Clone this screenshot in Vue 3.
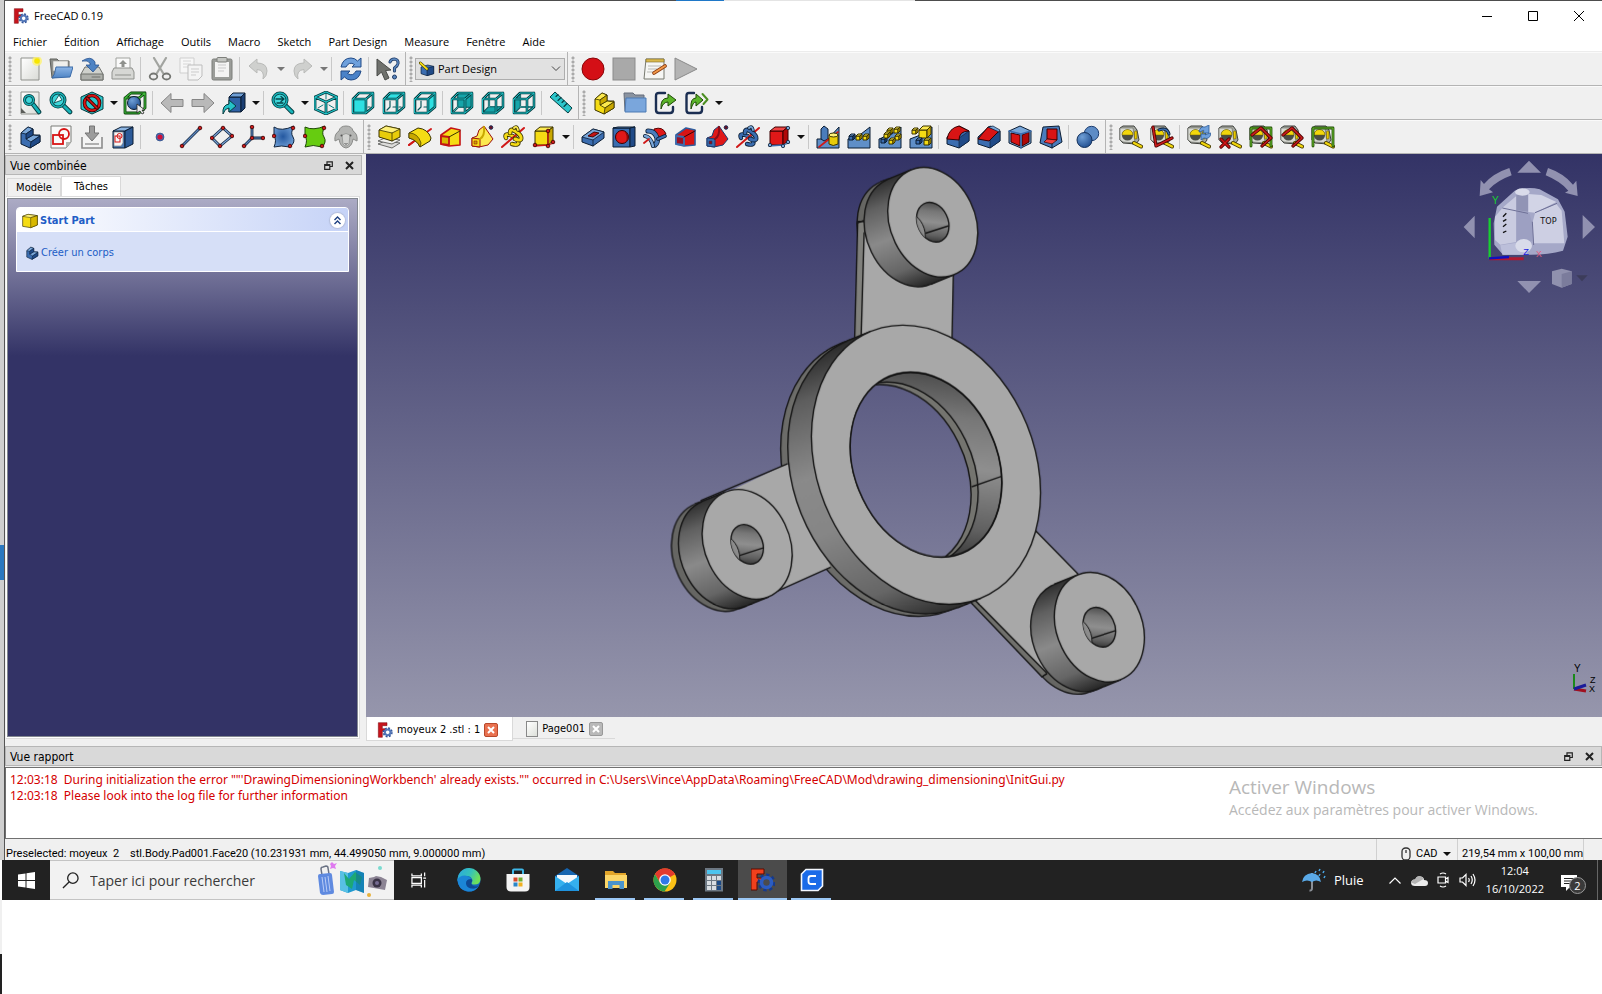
<script setup>
import { ref } from 'vue'

const menus = ['Fichier', 'Édition', 'Affichage', 'Outils', 'Macro', 'Sketch', 'Part Design', 'Measure', 'Fenêtre', 'Aide']
const workbench = ref('Part Design')
const search = ref('')

/* ---------- icon building blocks (24 x 24 canvas) ---------- */
const poly = (pts, fill, stroke = '#0b1521', w = 1) =>
  `<polygon points="${pts}" fill="${fill}" stroke="${stroke}" stroke-width="${w}" stroke-linejoin="round"/>`
const line = (d, stroke, w = 1.5) =>
  `<path d="${d}" fill="none" stroke="${stroke}" stroke-width="${w}" stroke-linecap="round" stroke-linejoin="round"/>`
const dot = (x, y, r = 1.8) => `<circle cx="${x}" cy="${y}" r="${r}" fill="#cc1a1a" stroke="#3a0000" stroke-width=".8"/>`
const tube = (d, inner, outer, w = 2) => line(d, outer, w + 1.6) + line(d, inner, w)
const box = (x, y, w, h, dx, dy, c, stroke) =>
  poly(`${x},${y} ${x + w},${y} ${x + w},${y + h} ${x},${y + h}`, c[0], stroke) +
  poly(`${x},${y} ${x + dx},${y - dy} ${x + w + dx},${y - dy} ${x + w},${y}`, c[1], stroke) +
  poly(`${x + w},${y} ${x + w + dx},${y - dy} ${x + w + dx},${y + h - dy} ${x + w},${y + h}`, c[2], stroke)

const Y = ['#f5dc14', '#fce94f', '#c9a800']
const B = ['#3b6db0', '#79a6d8', '#204a87']
const ys = '#3a3300'
const bs = '#0b1d33'

const cubeFaces = {
  front: '2,8 15,8 15,22 2,22', top: '2,8 8,2 22,2 15,8', right: '15,8 22,2 22,16 15,22',
  back: '8,2 22,2 22,16 8,16', bottom: '2,22 8,16 22,16 15,22', left: '2,8 8,2 8,16 2,22'
}
const view = (face) => {
  const solid = ['front', 'top', 'right'].includes(face)
  const hidden = solid
    ? line('M8 10V16L5 19M11 16H14M17 16H19', '#0d5a5e', 1.2)
    : tube('M8 2V16H22M8 16L2 22', '#7fe0e2', '#0d5a5e', 0.6)
  const frame = tube('M2 8H15V22H2ZM2 8L8 2H22V16L15 22M15 8L22 2', '#1fc6ca', '#063c40', 1)
  const fill = poly(cubeFaces[face], solid ? '#2ee0e2' : '#16a5aa', '#0d5a5e', 0.6)
  return hidden + fill + frame
}
const lens = (x, y, r, extra = '') =>
  line(`M${x + r * 0.7} ${y + r * 0.7}L21 21`, '#063c40', 4.6) + line(`M${x + r * 0.7} ${y + r * 0.7}L21 21`, '#17b3b8', 2.8) +
  `<circle cx="${x}" cy="${y}" r="${r}" fill="#3fd6da" stroke="#063c40" stroke-width="3"/><circle cx="${x}" cy="${y}" r="${r}" fill="none" stroke="#17b3b8" stroke-width="1.4"/>` + extra
const tape =
  poly('1,3 4,1 15,1 18,5 20,15 17,19 4,18 1,15', '#a6a9a2', '#3f413d') +
  poly('1,3 14,3 16,18 4,17 1,15', '#d7d9d3', '#5f615c', 0.6) +
  '<circle cx="8.500" cy="10" r="5.600" fill="#4a4c46"/><path d="M3 10A5.500 5.500 0 0 1 14 10Z" fill="#f2d60c" stroke="#6d5f00" stroke-width=".5"/>' +
  '<rect x="15.500" y="6" width="2.500" height="8" rx="1" fill="#e8c800" stroke="#6d5f00" stroke-width=".6"/>' +
  line('M15 18L22 21.500', '#4a3f00', 4) + line('M15 18L22 21.500', '#f2d60c', 2.2)
const arrowShape = 'M1 12L11 2.500V8.500H23V15.500H11V21.500Z'
const sheet = '<path d="M3 1H21V23H3Z" fill="url(#gPaper)" stroke="#8f918c"/>'
const ramp = poly('1,14 14,9 23,2 23,23 1,23', '#5f8fc8', bs)
const filletBody = poly('1,12 1,19 13,23 23,16 23,6 13,1', '#3b6db0', bs) + poly('13,13 23,6 23,16 13,23', '#204a87', bs, 0.6)
const L = (c, s) =>
  poly('3,8 10,2 15,4 15,10 22,10 22,17 12,23 3,19', c[0], s) + poly('3,8 10,2 15,4 8,9', c[1], s, 0.8) +
  poly('8,14 15,10 22,11 13,17', c[1], s, 0.8) + poly('8,9 15,4 15,10 8,14', c[2], s, 0.8) + poly('13,17 22,11 22,17 12,23', c[2], s, 0.8)
const pipe = (c, s) => poly('2,13 7,11 9,5 14,1 23,14 18,20 9,22 2,21', c[1], s) + poly('2,13 10,14 10,22 2,21', c[0], s) +
  line('M10 14Q15 11 14 2', c[2], 2) + poly('4,16 7,16 7,19 4,19', c[2], s, 0.6) + '<circle cx="21" cy="2.500" r="1.800" fill="#6b1020" stroke="#1f2a55"/>'
const helix = (c, s) => tube('M5 13Q3 8 9 10T17 16Q19 21 11 19', c[0], s, 2.8) + line('M1 22L23 3', '#d01818', 2) +
  tube('M9 8Q9 3 14 6T20 12Q21 17 14 14', c[0], s, 3) + tube('M13 3Q16 0 17 5', c[1], s, 1.8)

const icons = {
  new: sheet + '<circle cx="19" cy="4" r="5" fill="#fff36a" opacity=".75"/><circle cx="19" cy="4" r="2.800" fill="#f7e600"/>',
  open: poly('1,2 8,2 10,4 20,4 20,18 3,21', '#8c8e89', '#5f615d') + poly('4,4 19,4 19,14 4,14', '#efefec', '#9a9c97', 0.6) + '<path d="M7 10H24L21 20L3 21Q6 18 7 10Z" fill="url(#gFold)" stroke="#3a6aa8"/>',
  save: '<path d="M5 10H19L23 17V23H1V17Z" fill="#cfd1cc" stroke="#6f716d"/><path d="M1 17H23V23H1Z" fill="#aeb0ab" stroke="#6f716d"/>' + '<path d="M2 4Q11 -2 15 5V8H19L13 15L6 8H10V6Q8 3 2 4Z" fill="#4d83c4" stroke="#2a5490" stroke-width=".8"/>' + line('M12 20H20', '#6f716d', 1),
  print: '<path d="M5 1H19V12H5Z" fill="#fafafa" stroke="#a0a29e"/><path d="M3 11H21L23 15V22H1V15Z" fill="#d6d7d4" stroke="#8f918d"/><path d="M4 18H20" stroke="#8f918d"/><path d="M12 3L16 7H13.500V10H10.500V7H8Z" fill="#8f918d"/>',
  cut: line('M6 1L15 16M18 1L9 16', '#a2a4a0', 2.2) + '<ellipse cx="5.500" cy="19.500" rx="3.800" ry="3" fill="none" stroke="#747672" stroke-width="1.800"/><ellipse cx="18.500" cy="19.500" rx="3.800" ry="3" fill="none" stroke="#747672" stroke-width="1.800"/>',
  copy: '<path d="M1 1H15V16H1Z" fill="#f7f7f7" stroke="#cfcfcf"/><path d="M4 4H12M4 7H12M4 10H12" stroke="#d6d6d6"/><path d="M9 8H23V19L19 23H9Z" fill="#f4f4f4" stroke="#bdbdbd"/><path d="M12 12H20M12 15H20M12 18H17" stroke="#cbcbcb"/>',
  paste: '<rect x="2" y="2" width="20" height="21" rx="1.500" fill="#9b9d99" stroke="#7d7f7b"/><path d="M5 5H19V20H5Z" fill="#f4f4f3"/><path d="M8 8H16M8 11H16M8 14H14" stroke="#c9c9c9"/><rect x="7" y="0.500" width="10" height="4.500" rx="1" fill="#c4c6c2" stroke="#7d7f7b"/>',
  undo: '<path d="M2 9L10 2V6Q20 6 20 14Q20 19 16 22Q18 13 10 12.500V16Z" fill="#cfd0ce" stroke="#b9bab8"/>',
  redo: '<path d="M22 9L14 2V6Q4 6 4 14Q4 19 8 22Q6 13 14 12.500V16Z" fill="#cfd0ce" stroke="#b9bab8"/>',
  refresh: '<path d="M2 10Q4 1 12 1Q16 1 18.500 4L22 1V10H13L15.500 7.500Q10 4 7 10Z" fill="#6ea0dc" stroke="#204a87"/><path d="M22 14Q20 23 12 23Q8 23 5.500 20L2 23V14H11L8.500 16.500Q14 20 17 14Z" fill="#4a82c8" stroke="#204a87"/>',
  whats: '<path d="M1 2L1 19L5.500 15L9 23L13 21L9.500 13.500L15 13Z" fill="#6f716d" stroke="#494b48"/>' + tube('M14 5Q15 2 18.500 2Q22.500 2.500 22 6.500Q21.500 9 18.500 11V14', '#5a86bd', '#1e3a66', 1.5) + '<circle cx="18.500" cy="20" r="2" fill="#5a86bd" stroke="#1e3a66"/>',
  record: '<circle cx="12" cy="12" r="11" fill="#d40f16" stroke="#8a0408"/>',
  stop: '<rect x="1" y="1" width="22" height="22" fill="#a9a9a9" stroke="#8b8b8b"/>',
  macro: '<path d="M3 2H21V22H1Z" fill="#f6f6f4" stroke="#77796f"/><path d="M3 2H21V5H3Z" fill="#d9b84c" stroke="#7c6a2a" stroke-width=".6"/><path d="M5 9H18M5 12H14M4 15H12" stroke="#b9bab5"/>' + line('M11 16L22 9', '#8a3a10', 3.6) + line('M11 16L22 9', '#f39a4a', 2),
  play: '<path d="M1 1L23 12L1 23Z" fill="#b4b4b4" stroke="#8a8a8a"/>',

  fitAll: sheet + '<path d="M3 17L8 22H3Z" fill="#5a5c58"/>' + lens(11, 9, 4.5),
  fitSel: lens(9, 9, 7, '<path d="M5 12L10 4L13 9Z" fill="#e9ffff" stroke="#063c40" stroke-width=".8"/>'),
  draw: poly('12,1 23,6 23,18 12,23 1,18 1,6', '#2cc5ca', '#063c40') + '<circle cx="12" cy="12" r="7.500" fill="none" stroke="#3a0000" stroke-width="3.600"/><circle cx="12" cy="12" r="7.500" fill="none" stroke="#d81414" stroke-width="2"/>' + tube('M7 7L17 17', '#d81414', '#3a0000', 1.6),
  boxSel: tube('M2 7H16V22H2ZM2 7L8 2H22V17L16 22M16 7L22 2', '#3fb83a', '#063a06', 1.2) + '<circle cx="11" cy="12" r="6.500" fill="url(#gBlue)" stroke="#0b1d33"/>' + '<path d="M14 13V22L17 20L19 23L21 22L19 19H22Z" fill="#eee" stroke="#222" stroke-width=".8"/>',
  prev: `<path d="${arrowShape}" fill="#b9b9b9" stroke="#858585"/>`,
  next: `<g transform="matrix(-1 0 0 1 24 0)"><path d="${arrowShape}" fill="#b9b9b9" stroke="#858585"/></g>`,
  link: box(7, 6, 12, 15, 4, 4, ['#2f62a6', '#6f9fd6', '#1b3f74'], bs) + '<path d="M1 23Q0 14 7 13V9L14 15L7 21V17Q3 17 1 23Z" fill="#25c3c8" stroke="#063c40"/>',
  zoom: lens(9, 9, 7, line('M5 8H12M10 5.500L13 8L10 10.500M6 12H12', '#05464a', 1.3)),
  iso: tube('M12 1L23 6V18L12 23L1 18V6ZM1 6L12 11L23 6M12 11V23', '#22c8cc', '#063c40', 1.2) + line('M12 2V8M9 14L4 17M15 14L20 17', '#0d7a7e', 1),
  front: view('front'), top: view('top'), right: view('right'), back: view('back'), bottom: view('bottom'), left: view('left'),
  ruler: poly('1,6 6,1 23,17 19,22', '#2cc5ca', '#063c40') + line('M9 3.500L7 5.500M12 6.500L9 9.500M15 9.500L13 11.500M18 12.500L15 15.500', '#063c40', 1.1),
  part: L(Y, ys),
  group: '<path d="M1 2H10L12 4H21V20H2Z" fill="#8a93a0" stroke="#646d7a"/><path d="M3 7H23V21H2Z" fill="#7aa6dc" stroke="#4d7ab4"/>',
  share: line('M11 2H5Q2 2 2 5V19Q2 22 5 22H16Q19 22 19 19V16', '#1b2e52', 2.4) + '<path d="M7 18Q6 7 14 7V3L22 9L14 15V11Q9 11 7 18Z" fill="#5bb52a" stroke="#1e4a06"/>',
  share2: line('M9 2H4Q1.500 2 1.500 5V19Q1.500 22 4 22H14Q17 22 17 19V16', '#1b2e52', 2.4) + '<path d="M6 18Q5 7 11 7V3L18 9L11 15V11Q8 11 6 18Z" fill="#5bb52a" stroke="#1e4a06"/>' + line('M17.500 3L22.500 8.500L18.500 13', '#4c8f22', 2),

  body: L(B, bs),
  sketch: '<path d="M2 1H22V17L17 23H2Z" fill="#fafafa" stroke="#7a7c78"/><path d="M17 23V17H22Z" fill="#b5b7b2"/><rect x="4" y="10" width="10" height="9" fill="none" stroke="#d81414" stroke-width="1.800"/><circle cx="15" cy="9" r="5" fill="none" stroke="#d81414" stroke-width="1.800"/>',
  import: '<path d="M2 12V23H22V12" fill="#f4f4f4" stroke="#8c8c8c" stroke-width="1.600"/><path d="M5 19H19" stroke="#9a9a9a" stroke-width="1.500"/><path d="M9.500 1H14.500V8H19L12 16L5 8H9.500Z" fill="#9c9c9c" stroke="#747474"/>',
  mapSketch: box(2, 6, 12, 17, 8, 4, ['#4f7db8', '#8db5e2', '#2c5a98'], bs) + '<path d="M3 7H12V18L10 21H3Z" fill="#f6f6f6" stroke="#777" stroke-width=".6"/><rect x="4" y="11" width="5" height="6" fill="none" stroke="#d81414"/><circle cx="8.500" cy="11" r="2.500" fill="none" stroke="#d81414"/>',
  point: '<circle cx="12" cy="12" r="4" fill="#4a6db0" stroke="#23407a" stroke-width=".6"/><circle cx="12" cy="12" r="2.600" fill="#d0103a"/>',
  line: tube('M3 21L21 3', '#5b86bd', '#10243f', 1.2) + dot(3, 21) + dot(21, 3),
  plane: tube('M13 3L22 11L10 21L2 13Z', '#7aa2d4', '#10243f', 1.2) + dot(13, 3) + dot(22, 11) + dot(10, 21) + dot(2, 13),
  lcs: tube('M11 2V13H22M11 13L3 21', '#5b86bd', '#10243f', 1.2) + dot(11, 2) + dot(11, 13) + dot(22, 13) + dot(3, 21),
  shape: '<path d="M2 2Q9 7 22 1Q18 8 21 12Q24 17 18 22Q9 20 2 22Q5 15 2 11Z" fill="url(#gBlue2)" stroke="#10243f"/>' + dot(21, 3) + dot(2, 11) + dot(18, 21),
  subShape: '<path d="M2 2Q10 6 22 1Q18 8 21 12Q24 17 19 22Q10 19 2 22Q5 15 2 11Z" fill="#66cc10" stroke="#1e4a06"/>' + dot(21, 3) + dot(2, 11) + dot(19, 21),
  clone: '<path d="M12 1Q18 1 19 6Q24 9 23 16L19 14Q18 22 12 23Q6 22 5 14L1 16Q0 9 5 6Q6 1 12 1Z" fill="#b4b5b3" stroke="#8a8b89"/><path d="M8 10Q12 7 16 10L15 19Q12 23 9 19Z" fill="#d2d3d1" stroke="#8a8b89" stroke-width=".7"/><circle cx="7.500" cy="10.500" r="1" fill="#555"/><circle cx="16.500" cy="10.500" r="1" fill="#555"/><path d="M10.500 18L12 19.500L13.500 18" fill="none" stroke="#555"/>',

  pad: poly('1,19 8,16 23,18 15,23', '#dcdcda', '#4b4d49', 0.8) + poly('1,16 8,13 23,15 15,19', '#f2f2f0', '#4b4d49', 0.8) + poly('2,5 9,1 23,4 23,12 15,16 2,12', '#e8cc0a', ys) + poly('2,5 9,1 23,4 15,8', '#fdf07a', ys, 0.8) + line('M15 8V16', ys, 0.8),
  revolution: line('M1 20L23 4', '#d01818', 2) + '<path d="M1 8L10 3Q20 4 23 13L22 16L12 22Q9 15 1 13Z" fill="#f5dc14" stroke="#3a3300"/><path d="M1 8Q10 8 13 18L12 22Q9 15 1 13Z" fill="#c9a800" stroke="#3a3300" stroke-width=".7"/>' + line('M1 20L5 17', '#d01818', 2),
  loft: poly('2,10 12,3 21,5 21,20 10,21 2,19', '#f5dc14', '#c41414', 1.6) + poly('2,11 10,12 10,20 2,19', '#d8b800', '#c41414', 1.8) + line('M10 12L21 6', ys, 1),
  pipe: pipe(Y, '#9a1010'),
  helix: helix(Y, ys),
  addPrim: box(3, 6, 13, 14, 5, 4, Y, ys) + line('M16 6V20L2 21M16 20L22 18', '#cc1414', 1.3) + dot(16, 6) + dot(16, 21) + dot(3, 20) + dot(21, 17),
  pocket: poly('1,12 12,4 23,7 23,13 12,21 1,17', '#3b6db0', bs) + poly('1,12 12,4 23,7 12,15', '#79a6d8', bs, 0.8) + poly('7,11 13,7 18,8 12,12', '#c41414', '#3a0000', 0.9) + line('M12 15V21', bs, 0.8),
  hole: box(1, 3, 17, 19, 5, 1, B, bs) + '<circle cx="10" cy="12" r="6.500" fill="#e01818" stroke="#3a0000"/><path d="M12 6Q16 10 14 17Q17 15 16.500 12Q16 8 12 6Z" fill="#8a0808"/>',
  groove: '<path d="M11 4Q20 1 23 9L15 16Q10 12 11 4Z" fill="#e01818" stroke="#5a0000"/>' + tube('M5 6Q12 6 14 13Q15 18 12 20', '#4a7cbc', bs, 3.6) + tube('M2 11Q8 12 10 21', '#79a6d8', bs, 2.4) + tube('M15 14L22 11', '#3b6db0', bs, 2) + line('M1 18L6 14', '#d01818', 1.8),
  subLoft: poly('2,10 12,3 21,5 21,20 10,21 2,19', '#d81414', '#2f5c9c', 1.6) + poly('2,11 10,12 10,20 2,19', '#9a1024', '#3b6db0', 1.8) + line('M10 12L21 6', '#3a0000', 1),
  subPipe: pipe(['#3b6db0', '#e01818', '#8c0c18'], '#1c3d70'),
  subHelix: helix(B, bs),
  subPrim: box(3, 6, 13, 14, 5, 4, ['#e01818', '#f04545', '#b00808'], '#3a0000') + line('M2 21L16 20L22 18', '#3b6db0', 1.3) + [[3, 20], [16, 21], [21, 17], [21, 3]].map(p => `<circle cx="${p[0]}" cy="${p[1]}" r="1.700" fill="#79a6d8" stroke="#0b1d33" stroke-width=".8"/>`).join(''),
  mirror: poly('1,14 12,14 23,2 23,23 1,23', '#5f8fc8', bs) + poly('5,4 8,1 12,4 12,14 8,16 5,14', '#4a7cbc', bs) + line('M3 22L22 7', '#d01818', 1.6) + '<path d="M13 10V19Q17 22 22 19V10Z" fill="#e8cc0a" stroke="#3a3300"/><ellipse cx="17.500" cy="10" rx="4.500" ry="2" fill="#fdf07a" stroke="#3a3300"/>',
  linear: ramp + box(2, 11, 4, 4, 2, 2, B, bs) + box(9, 11, 4, 4, 2, 2, Y, ys) + box(16, 11, 4, 4, 2, 2, Y, ys),
  polar: ramp + box(9, 5, 4, 4, 2, 2, Y, ys) + box(16, 4, 4, 4, 2, 2, Y, ys) + box(3, 14, 4, 4, 2, 2, B, bs) + box(6, 9, 4, 4, 2, 2, Y, ys) + box(17, 11, 4, 4, 2, 2, Y, ys) + box(11, 15, 4, 4, 2, 2, Y, ys),
  multi: ramp + box(10, 5, 8, 8, 4, 4, Y, ys) + box(3, 5, 4, 4, 2, 2, Y, ys) + box(7, 15, 4, 4, 2, 2, B, bs) + box(15, 15, 5, 5, 2, 2, Y, ys),
  fillet: filletBody + '<path d="M1 14Q3 3 13 1L23 6Q13 6 13 15Z" fill="#d81414" stroke="#3a0000"/>',
  chamfer: filletBody + poly('1,14 11,2 22,6 12,16', '#d81414', '#3a0000') + poly('11,2 16,1 23,5 22,7', '#79a6d8', bs, 0.7),
  draft: poly('1,6 12,1 23,6 23,18 13,23 1,18', '#79a6d8', bs) + poly('3,8 12,10 12,21 3,17', '#d81414', '#3a0000') + poly('14,10 21,7 21,17 14,21', '#b00808', '#3a0000') + line('M1 6L13 9L23 6M13 9V23', '#3b6db0', 1.6),
  thick: poly('4,2 20,1 23,17 13,23 1,18', '#4a7cbc', bs) + poly('8,4 18,4 18,15 8,14', '#d81414', '#3a0000') + poly('8,14 18,15 13,19 5,17', '#f04040', '#3a0000', 0.7) + line('M13 19V23', bs, 1),
  bool: '<circle cx="15.500" cy="8.500" r="7.200" fill="#5d8cc6" stroke="#1c3d70"/><circle cx="8.500" cy="15" r="7.500" fill="url(#gBlue)" stroke="#12305c"/>',

  mLin: tape,
  mAng: tape + tube('M3 2L6 21L22 13', '#c81c1c', '#4a0000', 1.6) + tube('M9 5Q17 2 19 9', '#3b6db0', bs, 1.4),
  mRef: tape + '<path d="M12 7Q13 1 18 2L22 0V8H16Q18 4 15 6ZM24 8Q23 15 17 13L14 15V9H19Q17 11 20 9Z" fill="#6ea0dc" stroke="#2c5a98" stroke-width=".8"/>',
  mClr: tape + tube('M3 14L11 22M11 14L3 22', '#d01818', '#5a0000', 1.6),
  mAll: tape + tube('M2 21V3H22V21', '#66b82a', '#1e4a06', 1.2) + tube('M3 10L12 3L22 13L13 21', '#c81c1c', '#4a0000', 1.6),
  m3d: tape + tube('M3 10L12 3L22 13L13 21', '#c81c1c', '#4a0000', 1.6),
  mDelta: tape + tube('M2 21V3H22V21', '#66b82a', '#1e4a06', 1.2),
  wb: poly('3,9 13,6 22,8 22,19 12,22 3,19', '#3b6db0', bs) + poly('12,11 22,8 22,19 12,22', '#204a87', bs, 0.8) + line('M2 3L12 12', '#3a3300', 4.5) + line('M2 3L12 12', '#f5dc14', 2.6),
  yBox: poly('1,5 9,2 23,4 23,18 13,22 1,20', '#f5dc14', ys) + poly('1,5 9,2 23,4 13,7', '#fdf07a', ys, 0.8) + poly('13,7 23,4 23,18 13,22', '#d8b800', ys, 0.8),
  fc: '<path d="M2 1H15V5.500H8V10H13V14H8V23H2Z" fill="#c8141c" stroke="#7a0a10" stroke-width=".8"/><circle cx="16" cy="15.500" r="6" fill="none" stroke="#33559a" stroke-width="3.200" stroke-dasharray="2.700 2"/><circle cx="16" cy="15.500" r="4.200" fill="none" stroke="#5276b8" stroke-width="3"/>'
}

/* '|' is a separator, a trailing '+' gives the button a drop-down arrow */
const rows = [
  [
    ['new', 'open', 'save', 'print', '|', 'cut', 'copy', 'paste', '|', 'undo+', 'redo+', '|', 'refresh', '|', 'whats'],
    ['select'],
    ['record', 'stop', 'macro', 'play']
  ],
  [
    ['fitAll', 'fitSel', 'draw+', 'boxSel', '|', 'prev', 'next', 'link+', '|', 'zoom+', 'iso', '|', 'front', 'top', 'right', '|', 'back', 'bottom', 'left', '|', 'ruler'],
    ['part', 'group', 'share', 'share2+']
  ],
  [
    ['body', 'sketch', 'import', 'mapSketch', '|', 'point', 'line', 'plane', 'lcs', 'shape', 'subShape', 'clone'],
    ['pad', 'revolution', 'loft', 'pipe', 'helix', 'addPrim+', '|', 'pocket', 'hole', 'groove', 'subLoft', 'subPipe', 'subHelix', 'subPrim+', '|', 'mirror', 'linear', 'polar', 'multi', '|', 'fillet', 'chamfer', 'draft', 'thick', '|', 'bool'],
    ['mLin', 'mAng', '|', 'mRef', 'mClr', 'mAll', 'm3d', 'mDelta']
  ]
].map(row => row.map(bar => bar.map(s => ({ name: s.replace('+', ''), drop: s.endsWith('+') }))))

/* bosses of the part, by the centre of the front face */
const bosses = [
  { x: 807, y: 202, id: 'b1' },
  { x: 258, y: 1104, id: 'b2' },
  { x: 1300, y: 1336, id: 'b3' }
]

const log = [
  `12:03:18  During initialization the error ""'DrawingDimensioningWorkbench' already exists."" occurred in C:\\Users\\Vince\\AppData\\Roaming\\FreeCAD\\Mod\\drawing_dimensioning\\InitGui.py`,
  '12:03:18  Please look into the log file for further information'
]
const preselected = 'Preselected: moyeux  2    stl.Body.Pad001.Face20 (10.231931 mm, 44.499050 mm, 9.000000 mm)'

const apps = [
  { label: 'Edge', svg: '<defs><linearGradient id="eg" x1="0" y1="0" x2="1" y2="0.400"><stop offset="0" stop-color="#2aa7e0"/><stop offset=".6" stop-color="#36c3b8"/><stop offset="1" stop-color="#6ee05a"/></linearGradient></defs><circle cx="12" cy="12" r="11.500" fill="#1464b8"/><path d="M.5 12A11.500 11.500 0 0 1 23.500 11Q23.500 16.500 17.500 16.500Q14 16.500 14.500 14.500Q16 13 15 11Q13.500 8 10 8Q3 8 .5 13Z" fill="url(#eg)"/><path d="M.5 12Q2 7.500 8 7.500Q13 8 14 11Q9 11 9 15.500Q10 21 17 20.500Q20 20 22 18Q18 24 11 23.500Q1 22 .5 12Z" fill="#1b86d6"/><path d="M14.500 11.200Q9 11 9 15.500Q10 21 17 20.500Q20 20 22 18Q18 19 15.500 17.500Q13.500 16 14.500 14.500Q16 13 14.500 11.200Z" fill="#0e4a94"/>' },
  { label: 'Store', svg: '<path d="M7 6V2.500Q7 1.500 8 1.500H16Q17 1.500 17 2.500V6" fill="none" stroke="#3fb8e8" stroke-width="2"/><path d="M.5 6H23.500V19Q23.500 23.500 19 23.500H5Q.5 23.500 .5 19Z" fill="#f4f4f4"/><path d="M7.500 9.500H11.500V13.500H7.500Z" fill="#d84a2b"/><path d="M12.500 9.500H16.500V13.500H12.500Z" fill="#6fae2e"/><path d="M7.500 14.500H11.500V18.500H7.500Z" fill="#2a86c8"/><path d="M12.500 14.500H16.500V18.500H12.500Z" fill="#f0b020"/>' },
  { label: 'Courrier', svg: '<path d="M0 8L12 0L24 8V12H0Z" fill="#1565b0"/><path d="M2 7H22V15H2Z" fill="#f4f8fc"/><path d="M0 8L12 16L24 8V23H0Z" fill="#35b0ee"/><path d="M0 23L12 14L24 23Z" fill="#1f93de"/>' },
  { label: 'Explorateur', run: 1, svg: '<path d="M1 3H9L11 5H22V20H1Z" fill="#e2a52a"/><path d="M1 7H23V20H1Z" fill="#fbd668"/><path d="M4 13H20V21H15.500V17H8.500V21H4Z" fill="#4a94cc"/>' },
  { label: 'Chrome', run: 1, svg: '<circle cx="12" cy="12" r="11.500" fill="#fbc116"/><path d="M12 12L2 6.300A11.500 11.500 0 0 1 22 6.300Z" fill="#e33b2e"/><path d="M12 6.300H22A11.500 11.500 0 0 0 2 6.300L7 14.500Z" fill="#e33b2e"/><path d="M2 6.300A11.500 11.500 0 0 0 11.500 23.500L17 15L12 12L7 14.800Z" fill="#2da14c"/><circle cx="12" cy="12" r="5.800" fill="#fff"/><circle cx="12" cy="12" r="4.500" fill="#2f78e8"/>' },
  { label: 'Calculatrice', run: 1, svg: '<path d="M3 0H21V23.500H3Z" fill="#6d7883"/><path d="M5 2H19V6H5Z" fill="#4cc4ee"/>' + [5, 10, 15].map(x => [8, 13, 18].map(y => `<rect x="${x}" y="${y}" width="4" height="4" fill="${x === 15 && y > 8 ? '#1c4a86' : '#d8dde2'}"/>`).join('')).join('') },
  { label: 'FreeCAD', run: 1, active: 1, svg: '<path d="M0 1H13V6H6V10H11V14H6V22H0Z" fill="#f0401c" stroke="#5a0a00"/><circle cx="15.500" cy="14.500" r="7" fill="none" stroke="#163a8c" stroke-width="4" stroke-dasharray="3 2.400"/><circle cx="15.500" cy="14.500" r="5" fill="none" stroke="#2c5cc0" stroke-width="3.600"/>' },
  { label: 'Cura', run: 1, svg: '<path d="M6 1.500H22.500V18L18 22.500H1.500V6Z" fill="#1b6be8" stroke="#f4f8ff" stroke-width="1.600"/><path d="M16 8H11Q8.500 8 8.500 10.500V13.500Q8.500 16 11 16H16" fill="none" stroke="#fff" stroke-width="1.800"/>' }
]
</script>

<template>
  <div class="page">
    <svg class="defs" aria-hidden="true">
      <defs>
        <linearGradient id="gPaper" x1="0" y1="0" x2="1" y2="1"><stop offset="0" stop-color="#fff" /><stop offset="1" stop-color="#d9dbd6" /></linearGradient>
        <linearGradient id="gFold" x1="0" y1="0" x2="0" y2="1"><stop offset="0" stop-color="#8db6e6" /><stop offset="1" stop-color="#4d83c4" /></linearGradient>
        <radialGradient id="gBlue" cx=".35" cy=".3" r=".8"><stop offset="0" stop-color="#6f9fd6" /><stop offset="1" stop-color="#1c4a8c" /></radialGradient>
        <radialGradient id="gBlue2" cx=".45" cy=".5" r=".6"><stop offset="0" stop-color="#2458a0" /><stop offset="1" stop-color="#6f9fd6" /></radialGradient>
      </defs>
    </svg>

    <div class="desktop">
      <div class="gutter"></div>
      <div class="window">
        <div class="edge-strip"></div>
        <header class="titlebar">
          <svg class="app-icon" viewBox="0 0 24 24" v-html="icons.fc"></svg>
          <span class="title">FreeCAD 0.19</span>
          <button class="wbtn" aria-label="Réduire"><svg viewBox="0 0 10 10"><path d="M0 5.500H10" /></svg></button>
          <button class="wbtn" aria-label="Agrandir"><svg viewBox="0 0 10 10"><path d="M.5 .5H9.500V9.500H.5Z" /></svg></button>
          <button class="wbtn" aria-label="Fermer"><svg viewBox="0 0 10 10"><path d="M0 0L10 10M10 0L0 10" /></svg></button>
        </header>
        <nav class="menubar">
          <button v-for="m in menus" :key="m">{{ m }}</button>
        </nav>

        <div v-for="(row, r) in rows" :key="r" class="toolrow">
          <div v-for="(bar, b) in row" :key="b" class="toolbar">
            <span class="handle"></span>
            <template v-for="(t, i) in bar" :key="i">
              <span v-if="t.name === '|'" class="sep"></span>
              <label v-else-if="t.name === 'select'" class="combo">
                <svg class="combo-icon" viewBox="0 0 24 24" v-html="icons.wb"></svg>
                <select v-model="workbench" aria-label="Atelier"><option>Part Design</option></select>
                <svg class="combo-arrow" viewBox="0 0 10 6"><path d="M1 .5L5 4.500L9 .5" fill="none" stroke="#444" /></svg>
              </label>
              <button v-else class="tool" :class="{ drop: t.drop }" :aria-label="t.name">
                <svg class="ico" viewBox="0 0 24 24" v-html="icons[t.name]"></svg>
                <svg v-if="t.drop" class="caret" :class="{ dim: t.name.endsWith('do') }" viewBox="0 0 8 4"><path d="M0 0H8L4 4Z" /></svg>
              </button>
            </template>
          </div>
        </div>

        <main class="work">
          <aside class="dock">
            <div class="dock-head">
              <span>Vue combinée</span>
              <button aria-label="Détacher"><svg viewBox="0 0 9 9"><path d="M3 3V.8H8.300V5.500H6M.7 3.500H5.800V8.300H.7ZM.7 4.300H5.800" /></svg></button>
              <button aria-label="Fermer"><svg viewBox="0 0 9 9"><path class="x" d="M1 1L8 8M8 1L1 8" /></svg></button>
            </div>
            <div class="tabs">
              <button>Modèle</button>
              <button class="on">Tâches</button>
            </div>
            <div class="frame">
              <div class="tasks">
                <section class="card">
                  <div class="card-head">
                    <svg class="card-icon" viewBox="0 0 24 24" v-html="icons.yBox"></svg>
                    <b>Start Part</b>
                    <button class="fold" aria-label="Replier"><svg viewBox="0 0 9 9"><path d="M1.500 4L4.500 1L7.500 4M1.500 8L4.500 5L7.500 8" /></svg></button>
                  </div>
                  <div class="card-body">
                    <svg class="link-icon" viewBox="0 0 24 24" v-html="icons.body"></svg>
                    <a href="#">Créer un corps</a>
                  </div>
                </section>
              </div>
            </div>
          </aside>

          <section class="mdi">
            <div class="viewport">
              <svg class="model" viewBox="0 11 1568 1557" preserveAspectRatio="none">
                <defs>
                  <linearGradient id="side" gradientUnits="userSpaceOnUse" x1="-54" y1="-150" x2="54" y2="150">
                    <stop offset="0" stop-color="#303030" /><stop offset=".2" stop-color="#606060" /><stop offset=".5" stop-color="#8a8a8a" /><stop offset=".8" stop-color="#666" /><stop offset="1" stop-color="#262626" />
                  </linearGradient>
                  <!-- same shades, in the rotated frame of the ellipses -->
                  <linearGradient id="sideTilt" gradientUnits="userSpaceOnUse" x1="-158" y1="-21" x2="158" y2="21">
                    <stop offset="0" stop-color="#303030" /><stop offset=".2" stop-color="#606060" /><stop offset=".5" stop-color="#8a8a8a" /><stop offset=".8" stop-color="#666" /><stop offset="1" stop-color="#262626" />
                  </linearGradient>
                  <linearGradient id="ringSide" gradientUnits="userSpaceOnUse" x1="577" y1="516" x2="857" y2="1300">
                    <stop offset="0" stop-color="#262626" /><stop offset=".15" stop-color="#5e5e5e" /><stop offset=".4" stop-color="#8a8a8a" /><stop offset=".6" stop-color="#868686" /><stop offset=".85" stop-color="#666" /><stop offset="1" stop-color="#2a2a2a" />
                  </linearGradient>
                  <linearGradient id="ringTilt" gradientUnits="userSpaceOnUse" x1="-413" y1="-55" x2="413" y2="55">
                    <stop offset="0" stop-color="#262626" /><stop offset=".15" stop-color="#5e5e5e" /><stop offset=".4" stop-color="#8a8a8a" /><stop offset=".6" stop-color="#868686" /><stop offset=".85" stop-color="#666" /><stop offset="1" stop-color="#2a2a2a" />
                  </linearGradient>
                  <linearGradient id="bore" x1="0" y1=".25" x2="1" y2=".75">
                    <stop offset="0" stop-color="#444" /><stop offset=".25" stop-color="#777" /><stop offset=".5" stop-color="#8f8f8f" /><stop offset=".8" stop-color="#606060" /><stop offset="1" stop-color="#2c2c2c" />
                  </linearGradient>
                  <clipPath id="hole"><ellipse rx="270" ry="210" transform="translate(787 881) rotate(62.700)" /></clipPath>
                  <clipPath id="small"><ellipse rx="58" ry="45" transform="rotate(62.700)" /></clipPath>
                  <mask id="through" maskUnits="userSpaceOnUse" x="0" y="0" width="1568" height="1568">
                    <rect width="1568" height="1568" fill="#fff" />
                    <g clip-path="url(#hole)"><ellipse rx="270" ry="210" fill="#000" transform="translate(696 915) rotate(62.700)" /></g>
                  </mask>
                </defs>
                <g mask="url(#through)">
                  <!-- back of the plate -->
                  <g v-for="b in bosses" :key="b.id" :transform="`translate(${b.x - 91} ${b.y + 34})`">
                    <ellipse class="edge" rx="160" ry="125" fill="#666663" transform="rotate(62.700)" />
                    <path class="edge" d="M-64 -147L-43 -154L85 140L64 147" fill="#5c5c5a" />
                  </g>
                  <ellipse class="edge" rx="408" ry="318" fill="#6c6c69" transform="translate(696 915) rotate(62.700)" />
                  <path class="edge" d="M585 200L576 525H620V200Z" fill="#80807c" />
                  <path class="edge" d="M585 204L603 197M1128 1474L1145 1466" />
                  <path class="edge" d="M915 1262L1130 1475L1150 1462L935 1255Z" fill="#70706c" />
                  <!-- arms -->
                  <path d="M604 230L595 540H864L868 340L740 200Z" fill="#a8a8a8" />
                  <path class="edge" d="M604 230L595 530M868 340L864 530" />
                  <path d="M150 980L378 878L505 1168L330 1242L250 1200Z" fill="#a8a8a8" />
                  <path class="edge" d="M120 982L378 878M505 1168L340 1238" />
                  <path d="M1105 1060L1245 1195L1200 1460L1145 1465L925 1250Z" fill="#a8a8a8" />
                  <path class="edge" d="M1105 1060L1245 1195M1145 1465L925 1254" />
                  <!-- bosses -->
                  <g v-for="b in bosses" :key="b.id" :transform="`translate(${b.x} ${b.y})`">
                    <g transform="translate(-70 27)">
                      <ellipse class="edge" rx="160" ry="125" transform="rotate(62.700)" fill="url(#sideTilt)" />
                      <path d="M-64 -147L64 147L134 120L6 -174Z" fill="url(#side)" />
                    </g>
                    <path class="edge" d="M-134 -120L-64 -147M-6 174L64 147" />
                    <ellipse class="edge" rx="160" ry="125" transform="rotate(62.700)" fill="#a8a8a8" />
                    <ellipse class="edge" rx="58" ry="45" transform="rotate(62.700)" fill="url(#bore)" />
                    <g clip-path="url(#small)"><ellipse class="edge thin" rx="58" ry="45" transform="translate(-70 27) rotate(62.700)" fill="#8c8c8c" /></g>
                    <path class="edge" d="M-22 31L47 10" />
                  </g>
                  <!-- ring -->
                  <ellipse class="edge" rx="408" ry="318" transform="translate(717 908) rotate(62.700)" fill="url(#ringTilt)" />
                  <path d="M554 534L624 507L950 1255L880 1282Z" fill="url(#ringSide)" />
                  <path class="edge" d="M554 534L624 507M950 1255L880 1282" />
                  <ellipse class="edge" rx="408" ry="318" transform="translate(787 881) rotate(62.700)" fill="#a8a8a8" />
                  <ellipse class="edge" rx="270" ry="210" transform="translate(787 881) rotate(62.700)" fill="url(#bore)" />
                  <g clip-path="url(#hole)">
                    <ellipse class="edge" rx="270" ry="210" transform="translate(717 908) rotate(62.700)" fill="#74746f" />
                    <path class="edge" d="M922 943L1012 913" />
                  </g>
                </g>
                <g clip-path="url(#hole)"><ellipse class="edge" rx="270" ry="210" transform="translate(696 915) rotate(62.700)" /></g>
                <ellipse class="edge" rx="270" ry="210" transform="translate(787 881) rotate(62.700)" />
              </svg>

              <svg class="navcube" viewBox="1150 240 399 399">
                <g fill="#9191b0">
                  <path d="M1348 242L1384 278H1313ZM1348 639L1384 603H1313ZM1152 441L1185 407V475ZM1546 441L1509 405V477Z" />
                  <path d="M1289 264L1296 286Q1252 302 1228 328L1240 337L1200 348L1203 300L1213 312Q1240 280 1289 264Z" />
                  <path d="M1405 264L1398 286Q1442 304 1466 332L1456 338L1494 348L1490 302L1480 314Q1452 280 1405 264Z" />
                </g>
                <path d="M1305 332Q1345 318 1380 328L1435 358L1455 395L1464 470L1450 512Q1400 526 1340 524L1270 524L1244 494L1242 430L1252 380Z" fill="#a5a8c8" />
                <path d="M1270 382L1310 348V486L1262 494L1246 480V410Z" fill="#c9cbe0" />
                <path d="M1310 345H1345V395L1310 390Z" fill="#9194b5" />
                <path d="M1310 392L1350 402L1358 430V482L1310 486Z" fill="#9da0c2" />
                <path d="M1346 342L1385 345L1430 366L1366 398L1346 396Z" fill="#d2d4e6" />
                <path d="M1366 400L1430 372L1446 392L1454 490L1362 490L1358 430Z" fill="#cdcfe3" />
                <path d="M1268 524L1262 496L1310 488L1350 500L1340 524Z" fill="#bcbfda" />
                <ellipse cx="1328" cy="336" rx="22" ry="11" fill="#d9dbea" />
                <ellipse cx="1332" cy="497" rx="25" ry="20" fill="#d9dbea" />
                <path d="M1268 384L1345 400M1366 398L1432 370M1358 425L1362 495" fill="none" stroke="#6d6f96" stroke-width="3" />
                <path d="M1270 410L1280 400M1270 424L1280 418M1270 440L1280 432M1270 458L1280 453" stroke="#111" stroke-width="4" />
                <text class="face" x="1382" y="432" font-size="27" fill="#111">TOP</text>
                <path d="M1230 414V536" stroke="#18d030" stroke-width="7" />
                <path d="M1228 536H1332" stroke="#b01830" stroke-width="9" />
                <path d="M1228 535L1288 531" stroke="#1010c0" stroke-width="7" />
                <text x="1237" y="371" font-size="30" fill="#18d030">Y</text>
                <text x="1331" y="526" font-size="28" fill="#1818e0">Z</text>
                <text x="1369" y="530" font-size="26" fill="#e06080">X</text>
                <path d="M1417 574L1446 566L1476 574V612L1446 623L1417 612Z" fill="#9091ae" />
                <path d="M1446 582L1476 574V612L1446 623Z" fill="#7b7c9c" />
                <path d="M1490 586H1524L1507 604Z" fill="#3c3c5a" />
              </svg>

              <svg class="axes" viewBox="0 0 30 36">
                <path d="M4 11V26" stroke="#1a8a1a" stroke-width="2" />
                <path d="M4 26L16 28" stroke="#a01020" stroke-width="3" />
                <path d="M4 26L16 22" stroke="#1a1a9a" stroke-width="3" />
                <text x="4" y="9" font-size="10">Y</text>
                <text x="20" y="20" font-size="9">Z</text>
                <text x="19" y="29" font-size="9">X</text>
              </svg>
            </div>
            <div class="doctabs">
              <div class="doctab on">
                <svg viewBox="0 0 24 24" v-html="icons.fc"></svg><span>moyeux 2 .stl : 1</span>
                <button aria-label="Fermer moyeux"><svg viewBox="0 0 8 8"><path d="M1 1L7 7M7 1L1 7" /></svg></button>
              </div>
              <div class="doctab">
                <span class="sheet"></span><span>Page001</span>
                <button aria-label="Fermer Page001"><svg viewBox="0 0 8 8"><path d="M1 1L7 7M7 1L1 7" /></svg></button>
              </div>
            </div>
          </section>
        </main>

        <section class="report">
          <div class="dock-head">
            <span>Vue rapport</span>
            <button aria-label="Détacher"><svg viewBox="0 0 9 9"><path d="M3 3V.8H8.300V5.500H6M.7 3.500H5.800V8.300H.7ZM.7 4.300H5.800" /></svg></button>
            <button aria-label="Fermer"><svg viewBox="0 0 9 9"><path class="x" d="M1 1L8 8M8 1L1 8" /></svg></button>
          </div>
          <div class="log">
            <p v-for="l in log" :key="l">{{ l }}</p>
            <div class="activate"><strong>Activer Windows</strong><span>Accédez aux paramètres pour activer Windows.</span></div>
          </div>
        </section>

        <footer class="status">
          <span class="msg">{{ preselected }}</span>
          <button class="nav">
            <svg class="mouse" viewBox="0 0 10 14"><rect x="1" y="1" width="8" height="12" rx="3.500" /><path d="M5 3V6" /></svg>
            <span>CAD</span>
            <svg class="caret" viewBox="0 0 8 4"><path d="M0 0H8L4 4Z" /></svg>
          </button>
          <span class="dims">219,54 mm x 100,00 mm</span>
        </footer>
      </div>
    </div>

    <div class="taskbar">
      <button class="start" aria-label="Démarrer"><svg viewBox="0 0 17 17"><path d="M0 2.400L7.500 1.400V8H0ZM8.500 1.200L17 0V8H8.500ZM0 9H7.500V15.600L0 14.600ZM8.500 9H17V17L8.500 15.800Z" fill="#fff" /></svg></button>
      <label class="search">
        <svg class="mag" viewBox="0 0 18 18"><circle cx="11.500" cy="6.500" r="5.500" /><path d="M7.500 10.500L1 17" /></svg>
        <input v-model="search" type="text" placeholder="Taper ici pour rechercher" aria-label="Rechercher" />
        <svg class="trip" viewBox="0 0 72 38">
          <path d="M6 14L5 8Q5 6 7 6L10 5Q12 5 12 7L13 13" fill="none" stroke="#6a7284" stroke-width="1.500" />
          <path d="M2 15Q2 13 4 13L14 12Q16 12 16 14L18 31Q18 33 16 33L7 34Q5 34 4 32Z" fill="#5f8ae0" />
          <path d="M6 16L8 31M9 16L11 31M12 15L14 30" stroke="#b9ccf6" />
          <path d="M14 3L16 1L18 3L21 2L19 5L20 8L17 7L14 8L15 5Z" fill="#df7af0" />
          <path d="M24 10L32 12L40 9L48 12V32L40 29L32 32L24 29Z" fill="#1f9ad0" />
          <path d="M24 10L32 12V32L24 29Z" fill="#58c0e4" />
          <path d="M28 12L33 18L39 11L46 16L44 24L38 19L36 28L30 24Z" fill="#1da874" />
          <path d="M40 9L48 12V32L40 29Z" fill="#0c6c9c" opacity=".5" />
          <path d="M53 17L58 16L60 15L65 16L71 19L69 29L52 26Z" fill="#8c8494" /><circle cx="61" cy="22" r="4.500" fill="#3a3346" /><circle cx="61" cy="22" r="2" fill="#756c92" />
          <circle cx="64" cy="7" r="2" fill="#7adbd0" /><circle cx="53" cy="34" r="2" fill="#e8b23a" />
        </svg>
      </label>
      <button class="taskview" aria-label="Vue des tâches"><svg viewBox="0 0 17 17"><path d="M1 1V3.500H11V1M1 16V13.500H11V16M1 5.500H11V11.500H1ZM14.500 0V4M14.500 8V16M13 6H16" fill="none" stroke="#fff" stroke-width="1.300" /></svg></button>
      <button v-for="a in apps" :key="a.label" class="app" :class="{ run: a.run, active: a.active }" :aria-label="a.label">
        <svg viewBox="0 0 24 24" v-html="a.svg"></svg>
      </button>
      <div class="tray">
        <button class="weather">
          <svg viewBox="0 0 24 24"><path d="M14 3L13 5M18 1L17 3M22 3L21 5M18 6L17 8M23 8L22 10" stroke="#4aa8e8" stroke-width="1.500" /><path d="M10 5V20Q10 23 7.500 22.500" fill="none" stroke="#8a8f96" stroke-width="2" /><path d="M0 14Q1 6 10 5Q18 6 19 14Q14 11 10 14Q5 11 0 14Z" fill="#5aaae8" /></svg>
          Pluie
        </button>
        <svg class="stroke t-chev" viewBox="0 0 12 7"><path d="M.5 6.500L6 1L11.500 6.500" /></svg>
        <svg class="t-cloud" viewBox="0 0 17 11"><path d="M4 11Q0 11 0 7.500Q1 4 4 4.500Q6 0 10 1.500Q13 2 13 5Q17 5 17 8Q17 11 14 11Z" fill="#ececec" /><path d="M0 7.500Q1 4 4 4.500Q6 0 10 1.500Q12 2 12.500 4L4 9Z" fill="#b4b4b4" /></svg>
        <svg class="stroke t-meet" viewBox="0 0 12 16"><path d="M3 2Q6 0 9 2M3 14Q6 16 9 14M1 5H8.500V11H1ZM8.500 7L11 5.500V10.500L8.500 9" /></svg>
        <svg class="stroke t-vol" viewBox="0 0 17 14"><path d="M1 5H3.500L7 1.500V12.500L3.500 9H1ZM9.500 5Q11 7 9.500 9M12 3Q14.500 7 12 11M14 1Q18 7 14 13" /></svg>
        <div class="clock"><span>12:04</span><span>16/10/2022</span></div>
        <button class="notif" aria-label="Notifications">
          <svg viewBox="0 0 16 16"><path d="M0 0H16V12H9L5 16V12H0Z" fill="#fff" /><path d="M3 3.500H13M3 6H13M3 8.500H10" stroke="#222" /></svg>
          <span class="badge">2</span>
        </button>
      </div>
    </div>
    <div class="below"></div>
  </div>
</template>

<style>
html, body { height: 100%; background: #fff; }
</style>

<style scoped>
* { box-sizing: border-box; }
button { border: 0; background: none; padding: 0; margin: 0; font: inherit; color: inherit; }
svg { display: block; flex: none; }
p { margin: 0; }
.defs { position: absolute; width: 0; height: 0; }

.page { height: 100vh; display: flex; flex-direction: column; background: #fff; color: #000; font: 11px/16px "Open Sans", "Noto Sans", sans-serif; overflow: hidden; }
.desktop { flex: 1; min-height: 0; display: flex; }
.gutter { width: 5px; flex: none; border-right: 1px solid #555; background: linear-gradient(#2b78c0, #2b78c0) 0 66% / 4px 35px no-repeat, #cfcfcf; }
.window { flex: 1; min-width: 0; display: flex; flex-direction: column; background: #f0f0f0; }
.edge-strip { height: 1px; flex: none; background: linear-gradient(90deg, #4d4d4d 42%, #1f78c8 42% 45%, #e4e4e4 45% 57%, #4d4d4d 57%); }

.titlebar { height: 29px; flex: none; display: flex; align-items: center; background: #fff; padding-left: 8px; }
.app-icon { width: 16px; height: 16px; margin-right: 5px; }
.title { flex: 1; }
.wbtn { width: 46px; height: 29px; display: grid; place-items: center; }
.wbtn svg { width: 10px; height: 10px; }
.wbtn path { fill: none; stroke: #000; }
.menubar { height: 22px; flex: none; display: flex; gap: 17px; padding: 2px 8px 0; background: #fff; border-bottom: 1px solid #ececec; }

.toolrow { height: 34px; flex: none; display: flex; border-bottom: 1px solid #b4b4b4; box-shadow: inset 0 1px #fafafa; }
.toolbar { display: flex; align-items: center; padding-right: 2px; }
.toolbar + .toolbar { border-left: 1px solid #b4b4b4; }
.handle { width: 9px; height: 26px; background: radial-gradient(circle, #aaa 1px, transparent 2px) 3px 0 / 4px 4px repeat-y; }
.sep { width: 1px; height: 24px; margin: 0 3px 0 2px; background: #c8c8c8; }
.tool { width: 31px; height: 30px; display: flex; align-items: center; padding-left: 4px; }
.tool.drop { width: 43px; }
.ico { width: 24px; height: 24px; }
.caret { width: 8px; height: 4px; fill: #111; }
.tool .caret { margin-left: 6px; }
.caret.dim { fill: #777; }
.combo { position: relative; width: 150px; height: 22px; }
.combo select { width: 100%; height: 22px; appearance: none; border: 1px solid #adadad; border-radius: 0; background: #e1e1e1; padding: 0 20px 0 22px; font: inherit; color: #000; }
.combo-icon { position: absolute; left: 4px; top: 3px; width: 16px; height: 16px; }
.combo-arrow { position: absolute; right: 4px; top: 8px; width: 10px; height: 6px; pointer-events: none; }

.work { flex: 1; min-height: 0; display: flex; gap: 4px; }
.dock { width: 357px; flex: none; display: flex; flex-direction: column; padding: 1px 0 7px; }
.dock-head { height: 20px; flex: none; display: flex; align-items: center; gap: 12px; padding: 1px 7px 0 4px; background: #d9d9d9; border: 1px solid #b6b6b6; font: 12px/16px "DejaVu Sans Condensed", "DejaVu Sans", sans-serif; }
.dock-head span { flex: 1; }
.dock-head svg { width: 9px; height: 9px; }
.dock-head path { fill: none; stroke: #222; stroke-width: 1.2; }
.dock-head .x { stroke-width: 2; }
.tabs { display: flex; align-items: flex-end; padding: 1px 2px 0; font: 11px/18px "DejaVu Sans Condensed", "DejaVu Sans", sans-serif; }
.tabs button { width: 54px; height: 18px; border: 1px solid #d9d9d9; border-bottom: 0; background: #f0f0f0; }
.tabs .on { width: 60px; height: 20px; background: #fff; }
.frame { flex: 1; display: flex; margin: 0 2px 0 1px; padding: 1px; border: 1px solid #dcdcdc; border-left: 0; background: #fff; }
.tasks { flex: 1; border: 1px solid #828790; padding: 8px; background: linear-gradient(#acabc5, #333366 157px); }
.card { border: 1px solid #fff; border-radius: 4px 4px 0 0; background: #d6dff7; }
.card-head { height: 24px; display: flex; align-items: center; padding: 2px 3px 0 5px; border-bottom: 1px solid #fff; border-radius: 3px 3px 0 0; background: linear-gradient(90deg, #fff, #c6d3f7); color: #215dc6; font: 11px/16px "DejaVu Sans Condensed", "DejaVu Sans", sans-serif; }
.card-icon { width: 16px; height: 16px; margin-right: 2px; }
.card-head b { flex: 1; }
.fold { width: 15px; height: 15px; display: grid; place-items: center; border-radius: 50%; background: #fff; box-shadow: 0 0 1px 1px #b5bfdc; }
.fold svg { width: 9px; height: 9px; }
.fold path { fill: none; stroke: #1c3f80; stroke-width: 1.4; }
.card-body { height: 39px; display: flex; align-items: center; gap: 2px; padding: 2px 0 0 8px; }
.link-icon { width: 14px; height: 14px; }
.card-body a { color: #215dc6; text-decoration: none; font: 11px/16px "DejaVu Sans Condensed", "DejaVu Sans", sans-serif; }

.mdi { flex: 1; min-width: 0; display: flex; flex-direction: column; }
.viewport { flex: 1; min-height: 0; position: relative; overflow: hidden; background: linear-gradient(#333366, #9696ac); }
.model { position: absolute; left: 294px; top: 0; width: 530px; height: 556px; }
.edge { stroke: #161616; stroke-width: 1.4px; vector-effect: non-scaling-stroke; }
.edge:not([fill]) { fill: none; }
.edge.thin { stroke-width: 1px; }
.navcube { position: absolute; right: 6px; top: 6px; width: 133px; height: 133px; }
.axes { position: absolute; right: 2px; bottom: 18px; width: 30px; height: 36px; }
.navcube text, .axes text { font-family: "Liberation Sans", sans-serif; }
.navcube .face { font-family: "Liberation Sans Narrow", "DejaVu Sans Condensed", sans-serif; }
.doctabs { height: 29px; flex: none; display: flex; align-items: flex-start; font: 11px/16px "DejaVu Sans Condensed", "DejaVu Sans", sans-serif; }
.doctab { height: 22px; display: flex; align-items: center; gap: 4px; padding: 2px 12px 0 13px; border-bottom: 1px solid #d9d9d9; }
.doctab.on { height: 24px; padding: 2px 14px 0 10px; background: #fff; border: 1px solid #d9d9d9; border-top: 0; }
.doctab > svg { width: 16px; height: 16px; }
.sheet { width: 12px; height: 16px; border: 1px solid #888; background: linear-gradient(135deg, #fff, #dde0da); }
.doctab button { width: 14px; height: 14px; display: grid; place-items: center; border-radius: 2px; background: #b9b9b9; border: 1px solid #999; }
.doctab.on button { background: #e9714f; border-color: #b8492c; }
.doctab button svg { width: 8px; height: 8px; }
.doctab button path { stroke: #fff; stroke-width: 2; }

.report { flex: none; display: flex; flex-direction: column; gap: 1px; }
.log { position: relative; height: 72px; padding: 4px; border: 1px solid #707070; border-right: 0; background: #fff; color: #d40000; font: 12px/16px "Noto Sans", sans-serif; white-space: pre; }
.activate { position: absolute; right: 64px; top: 7px; display: flex; flex-direction: column; color: #b8b8b8; font: 14px/22px "Open Sans", sans-serif; }
.activate strong { font-weight: 400; font-size: 19px; line-height: 24px; }
.status { height: 21px; flex: none; display: flex; font: 11px/12px Roboto, "Open Sans", sans-serif; white-space: pre; }
.msg { flex: 1; padding: 9px 0 0 1px; }
.nav { width: 81px; padding: 9px 0 0 24px; border-left: 1px solid #d0d0d0; display: flex; align-items: center; gap: 5px; }
.mouse { width: 10px; height: 14px; }
.mouse rect, .mouse path { fill: none; stroke: #333; stroke-width: 1.3; }
.dims { width: 127px; margin-right: 18px; padding: 9px 0 0 4px; border: solid #d0d0d0; border-width: 0 1px; }

.taskbar { height: 40px; flex: none; display: flex; margin-left: 2px; background: #222; color: #fff; font-family: "Open Sans", sans-serif; }
.start { width: 48px; display: grid; place-items: center; }
.start svg { width: 17px; height: 17px; }
.search { width: 344px; display: flex; align-items: center; padding: 0 6px 0 12px; background: #f2f2f2; border: 1px solid #c4c4c4; border-width: 1px 0; }
.mag { width: 17px; height: 17px; }
.mag circle, .mag path { fill: none; stroke: #222; stroke-width: 1.4; }
.search input { flex: 1; min-width: 0; height: 36px; margin-left: 11px; padding: 0; border: 0; outline: 0; background: none; font: 14px/20px "Open Sans", sans-serif; }
.search input::placeholder { color: #3a3a3a; opacity: 1; }
.trip { width: 72px; height: 38px; }
.taskview { width: 50px; display: grid; place-items: center; }
.taskview svg { width: 16px; height: 17px; }
.app { width: 49px; display: grid; place-items: center; position: relative; }
.app svg { width: 24px; height: 24px; }
.app.run::after { content: ""; position: absolute; left: 4px; right: 5px; bottom: 0; height: 2px; background: #9cc8f5; }
.app.active { background: #4b4b4b; }
.app.active::after { left: 0; right: 0; }
.tray { flex: 1; display: flex; align-items: center; justify-content: flex-end; margin-right: 4px; border-right: 1px solid #666; }
.stroke path { fill: none; stroke: #fff; stroke-width: 1.2; }
.weather { display: flex; align-items: center; gap: 8px; margin-right: 25px; font-size: 13px; }
.weather svg { width: 24px; height: 24px; }
.t-chev { width: 12px; height: 7px; margin-right: 10px; }
.t-cloud { width: 17px; height: 11px; margin-right: 9px; }
.t-meet { width: 12px; height: 16px; margin-right: 10px; }
.t-vol { width: 17px; height: 14px; margin-right: 10px; }
.clock { display: flex; flex-direction: column; align-items: center; font-size: 11px; line-height: 18px; }
.notif { position: relative; width: 28px; height: 30px; margin: 0 8px 0 17px; padding: 5px 0 0; }
.notif svg { width: 16px; height: 16px; }
.badge { position: absolute; left: 8px; top: 12px; width: 17px; height: 17px; border: 1px solid #999; border-radius: 50%; background: #3a3a3a; font-size: 11px; line-height: 15px; text-align: center; }
.below { height: 94px; flex: none; background: linear-gradient(#f0f0f0 54px, #222 54px) 0 0 / 2px 100% no-repeat; }
</style>
